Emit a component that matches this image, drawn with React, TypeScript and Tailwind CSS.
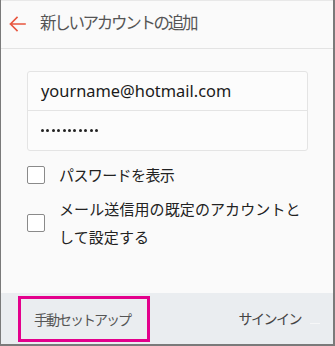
import React from "react";

const font = { fontFamily: '"Noto Sans", "Noto Sans CJK JP", sans-serif' };

export default function App() {
  return (
    <div
      className="w-[335px] h-[346px] flex flex-col bg-[#fafafa] border-l border-r-2 border-b-2 border-[#7a7a7a] overflow-hidden"
      style={font}
    >
      <div className="h-[49px] shrink-0 flex items-center border-b border-[#e3e3e3] border-t border-t-[#e8e8e8]">
        <svg width="17" height="16" viewBox="0 0 17 16" className="ml-[8px] -mt-[2px]">
          <path d="M1.5 8 H16 M8 1.5 L1.5 8 L8 14.5" stroke="#e8553e" strokeWidth="1.6" fill="none" strokeLinecap="square" />
        </svg>
        <div className="ml-[14px] -mt-[3px] text-[16.5px] text-[#555] leading-none tracking-[-2.3px]">新しいアカウントの追加</div>
      </div>
      <div className="flex-1 flex flex-col pl-[26px]">
        <div className="mt-[22px] w-[281px] border border-[#e4e4e4] rounded-[3px] bg-[#fcfcfc]">
          <div className="h-[39px] flex items-center pl-[13px] border-b border-[#e4e4e4] text-[16.4px] text-[#1a1a1a]">
            yourname@hotmail.com
          </div>
          <div className="h-[39px] flex items-center pl-[13px] gap-[2.4px]">
            {Array.from({ length: 11 }).map((_, i) => (
              <span key={i} className="w-[3px] h-[3px] rounded-full bg-[#222]" />
            ))}
          </div>
        </div>
        <div className="mt-[15px] flex items-center">
          <div className="w-[18px] h-[18px] border border-[#8a8a8a] rounded-[2px] bg-white" />
          <div className="ml-[14px] text-[15px] text-[#222] leading-none tracking-[-0.6px]">パスワードを表示</div>
        </div>
        <div className="mt-[11px] flex items-center">
          <div className="w-[18px] h-[18px] border border-[#8a8a8a] rounded-[2px] bg-white shrink-0" />
          <div className="ml-[14px] text-[15px] text-[#222] leading-[28px] tracking-[0.1px]">
            メール送信用の既定のアカウントと
            <br />
            して設定する
          </div>
        </div>
      </div>
      <div className="h-[51px] shrink-0 bg-[#eaedf0] flex items-center relative">
        <div className="ml-[17px] mt-[1px] w-[132px] h-[46px] border-[3px] border-[#e3008c] flex items-center pl-[13px]">
          <span className="text-[14px] text-[#555] tracking-[-2px]">手動セットアップ</span>
        </div>
        <span className="ml-auto mr-[32px] text-[14px] text-[#444] tracking-[-1.5px]">サインイン</span>
        <div className="absolute left-[309px] top-[30px] w-[10px] h-px bg-[#f6f7f8]" />
      </div>
    </div>
  );
}
